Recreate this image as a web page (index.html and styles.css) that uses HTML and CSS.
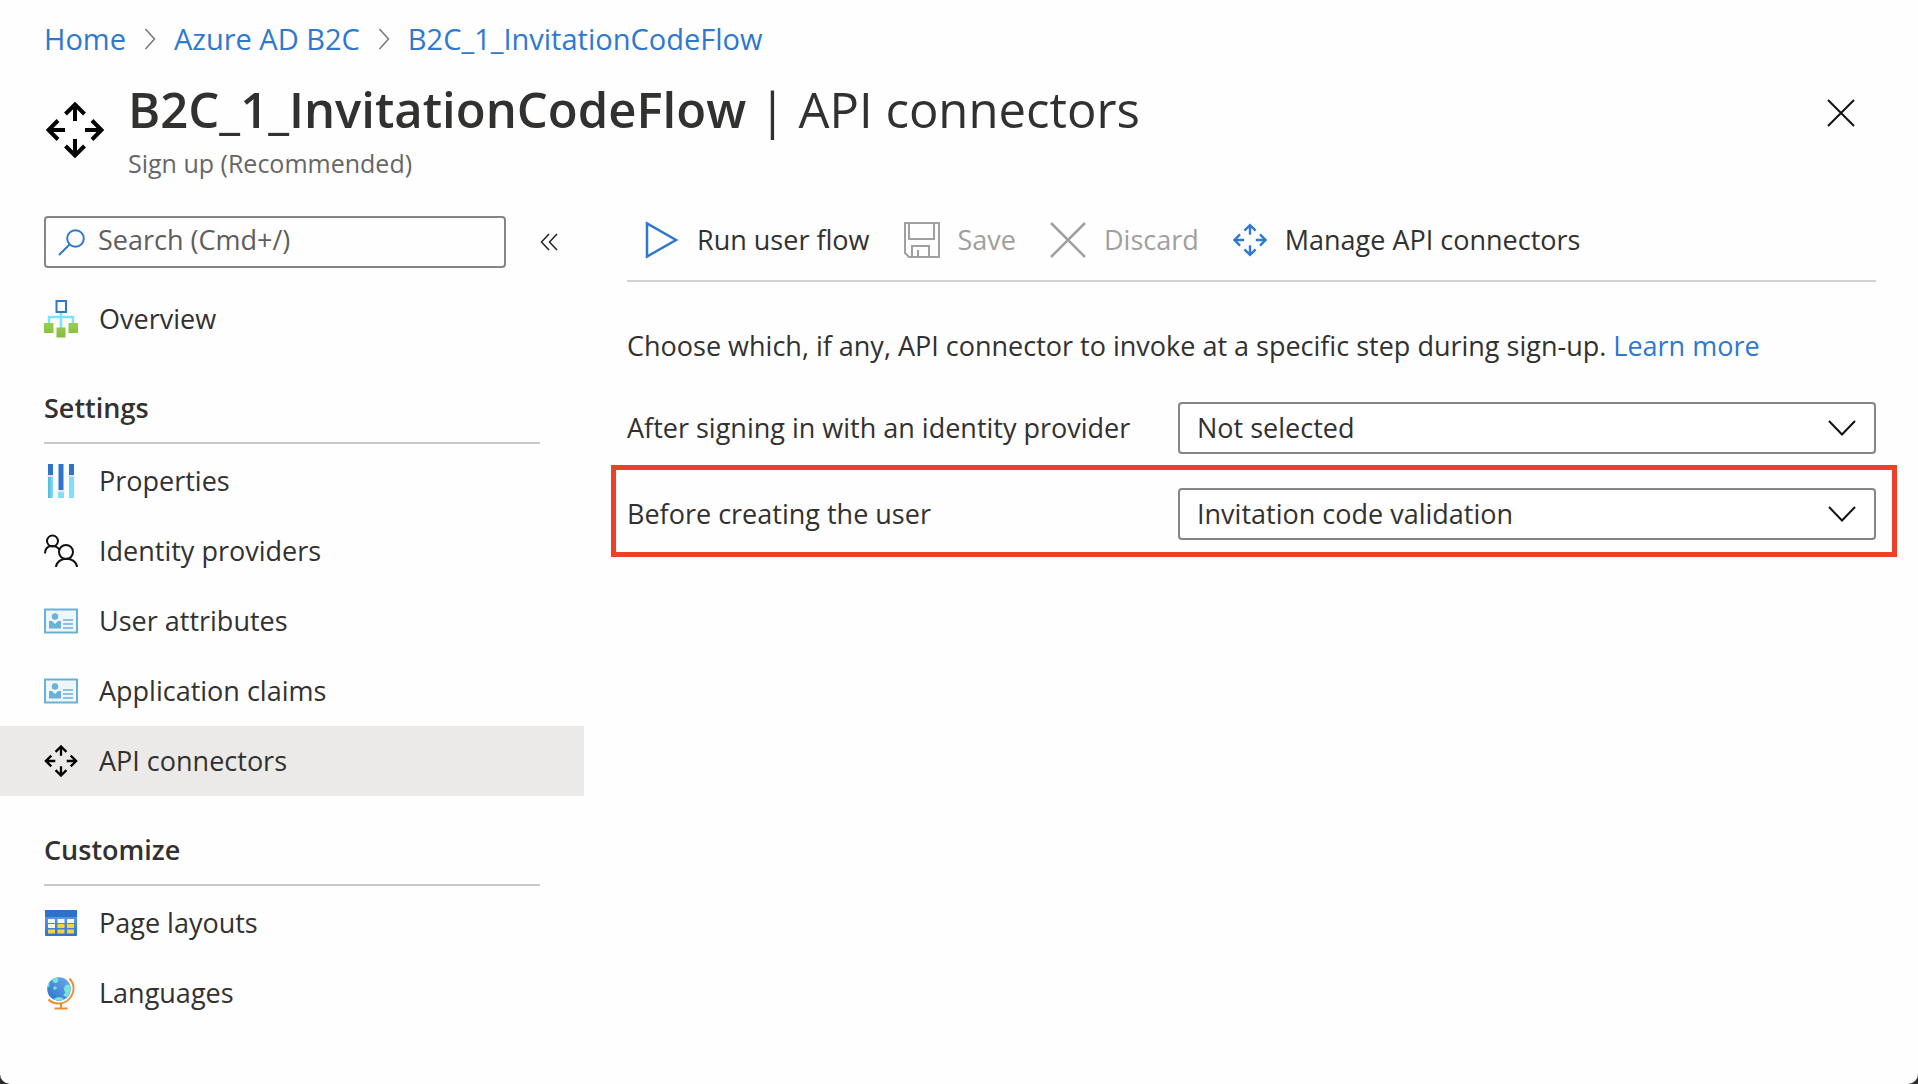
FILE: index.html
```html
<!DOCTYPE html>
<html lang="en">
<head>
<meta charset="utf-8">
<meta name="viewport" content="width=device-width, initial-scale=1">
<title>B2C_1_InvitationCodeFlow | API connectors</title>
<link rel="stylesheet" href="styles.css">
</head>
<body>
<svg class="defs" aria-hidden="true">
  <defs>
    <symbol id="arrows" viewBox="0 0 58 56">
      <g fill="none" stroke="currentColor" stroke-width="4">
        <path d="M29 19V2M19.500 12L29 2.500 38.500 12"/>
        <path d="M29 37V54M19.500 44L29 53.500 38.500 44"/>
        <path d="M19 28H2M12 18.500L2.500 28 12 37.500"/>
        <path d="M39 28H56M46 18.500L55.500 28 46 37.500"/>
      </g>
    </symbol>
    <symbol id="card" viewBox="0 0 34 26">
      <rect x="1" y="1.500" width="32" height="23" fill="#eef6fb" stroke="#69b1d6" stroke-width="2"/>
      <circle cx="11" cy="8.500" r="3.200" fill="#69b1d6"/>
      <path d="M5 13h3l3 3 3-3h3v7.500H5z" fill="#69b1d6"/>
      <path d="M19 12h10M19 16h10M19 20h10" stroke="#69b1d6" stroke-width="1.400"/>
    </symbol>
    <symbol id="crumb" viewBox="0 0 12 22">
      <path d="M1.500 1L10.500 11 1.500 21" fill="none" stroke="#777" stroke-width="1.500"/>
    </symbol>
    <symbol id="chevron" viewBox="0 0 28 16">
      <path d="M1 1L14 14.500 27 1" fill="none" stroke="#111" stroke-width="2"/>
    </symbol>
    <linearGradient id="green" x1="0" y1="0" x2="0" y2="1"><stop offset="0" stop-color="#98cf4d"/><stop offset="1" stop-color="#83bb3f"/></linearGradient>
    <linearGradient id="sheet" x1="0" y1="0" x2="0" y2="1"><stop offset="0" stop-color="#6ba4ec"/><stop offset="1" stop-color="#2c74cc"/></linearGradient>
    <linearGradient id="globe" x1="1" y1="0" x2="0" y2="1"><stop offset="0" stop-color="#72a8ef"/><stop offset="1" stop-color="#2b73cd"/></linearGradient>
    <linearGradient id="cyan"><stop offset="0" stop-color="#58b5d5"/><stop offset="1" stop-color="#7be0fa"/></linearGradient>
  </defs>
</svg>
<div class="blade">
  <header class="header">
    <nav class="breadcrumb" aria-label="Breadcrumb">
      <a href="#">Home</a>
      <svg class="crumb"><use href="#crumb"/></svg>
      <a href="#">Azure AD B2C</a>
      <svg class="crumb"><use href="#crumb"/></svg>
      <a href="#">B2C_1_InvitationCodeFlow</a>
    </nav>
    <div class="heading">
      <svg class="heading-icon"><use href="#arrows"/></svg>
      <div class="heading-text">
        <h1><strong>B2C_1_InvitationCodeFlow</strong> | API connectors</h1>
        <p>Sign up (Recommended)</p>
      </div>
      <button class="close" type="button" aria-label="Close">
        <svg viewBox="0 0 28 28" width="28" height="28"><path d="M1 1L27 27M27 1L1 27" stroke="#111" stroke-width="2"/></svg>
      </button>
    </div>
  </header>
  <div class="body">
    <aside class="sidebar">
      <div class="search-row">
        <label class="search">
          <svg viewBox="0 0 27 27" width="27" height="27" fill="none" stroke="#2e78d0" stroke-width="2"><circle cx="17.500" cy="9.500" r="8.300"/><path d="M11.500 15.500L1 26"/></svg>
          <input type="search" placeholder="Search (Cmd+/)" aria-label="Search">
        </label>
        <button class="collapse" type="button" aria-label="Collapse menu">
          <svg viewBox="0 0 18 18" width="18" height="18" fill="none" stroke="#222" stroke-width="1.500"><path d="M9 1L1.500 9 9 17M17 1L9.500 9 17 17"/></svg>
        </button>
      </div>
      <nav aria-label="Menu">
        <ul class="menu">
          <li><a href="#">
            <svg viewBox="0 0 34 40" width="34" height="40"><path d="M17 13v16M5 25v-7h24v7" fill="none" stroke="#7be3fb" stroke-width="2.500"/><rect x="12.500" y="2" width="9.500" height="11" fill="#fff" stroke="#2e78d0" stroke-width="2"/><path d="M0 24h9.500v10H0zM12.500 28.500h9v10h-9zM24.500 24H34v10h-9.500z" fill="url(#green)"/></svg>
            Overview</a></li>
        </ul>
        <h2>Settings</h2>
        <ul class="menu section">
          <li><a href="#">
            <svg viewBox="0 0 34 36" width="34" height="36"><path d="M4 14h5v21H4z" fill="url(#cyan)"/><path d="M14 29h6v6h-6zM25 14h5v21h-5z" fill="#7be0fa"/><path d="M4 1h5v11H4zM14.500 1h5v26h-5zM25 1h5v11h-5z" fill="#2e74cb"/><path d="M3.500 13h6M13.500 28.500h7M24.500 13h6" stroke="#e0e0e4" stroke-width="2"/></svg>
            Properties</a></li>
          <li><a href="#">
            <svg viewBox="0 0 34 34" width="34" height="34" fill="none" stroke="#111" stroke-width="2"><circle cx="8.500" cy="7" r="5.500"/><path d="M1 19.500C1 9.500 13 10.500 15.500 16"/><circle cx="22" cy="18" r="7"/><path d="M12 33C13 22 32 22 33 33"/></svg>
            Identity providers</a></li>
          <li><a href="#"><svg width="34" height="26"><use href="#card"/></svg>User attributes</a></li>
          <li><a href="#"><svg width="34" height="26"><use href="#card"/></svg>Application claims</a></li>
          <li><a class="current" href="#" aria-current="page"><svg width="34" height="32"><use href="#arrows"/></svg>API connectors</a></li>
        </ul>
        <h2>Customize</h2>
        <ul class="menu section">
          <li><a href="#">
            <svg viewBox="0 0 34 28" width="34" height="28"><rect x="1" y="1" width="32" height="26" rx="1" fill="url(#sheet)"/><path d="M1 1h32v7H1z" fill="#2c72c8"/><path d="M4 10h7v4H4zM13.500 10h7v4h-7zM23 10h7v4h-7zM4 15h7v4H4z" fill="#f3f6fb"/><path d="M13.500 15h7v4h-7zM23 15h7v4h-7zM4 20.500h7v4H4zM13.500 20.500h7v4h-7zM23 20.500h7v4h-7z" fill="#fbd23c"/></svg>
            Page layouts</a></li>
          <li><a href="#">
            <svg viewBox="0 0 34 34" width="34" height="34"><circle cx="15" cy="13" r="11.800" fill="url(#globe)"/><path d="M8 3l5-1.500c2 2 1.500 5-1 5.500-2 .500-3.500-1.500-4-4zM20 12c1-4 5-4.500 6.500-2 .700 5-.500 8-3 10.500-1 .500-4 0-4-2l2-2c-1-1-1.500-2.500-1.500-4.500zM10 23c2-2 7-2.500 10 0-3 2-7 2-10 0zM4 8l2-1-1 4-1.500.500z" fill="#74e5d0"/><circle cx="11" cy="12" r="1.800" fill="#74e5d0"/><path d="M25.500 2.500C35 13 26 28 14.500 27.500 10.500 27.500 7 26 4.500 23.500M17 28v4.500M10.500 32.500h13" fill="none" stroke="#ee8a30" stroke-width="2"/></svg>
            Languages</a></li>
        </ul>
      </nav>
    </aside>
    <main class="content">
      <div class="toolbar">
        <button type="button"><svg viewBox="0 0 36 38" width="36" height="38"><path d="M4 2.500V35.500L33 19z" fill="none" stroke="#2e78d0" stroke-width="2.500"/></svg>Run user flow</button>
        <button type="button" disabled><svg viewBox="0 0 36 36" width="36" height="36" fill="none" stroke="#a0a0a0" stroke-width="2"><path d="M1 1h34v34H5l-4-4zM5 1v16h25V1M8 35V24h17v11M14 35v-7"/></svg>Save</button>
        <button type="button" disabled><svg viewBox="0 0 36 36" width="36" height="36"><path d="M1 1L35 35M35 1L1 35" stroke="#a0a0a0" stroke-width="2.500"/></svg>Discard</button>
        <button class="manage" type="button"><svg width="34" height="34"><use href="#arrows"/></svg>Manage API connectors</button>
      </div>
      <p class="intro">Choose which, if any, API connector to invoke at a specific step during sign-up. <a href="#">Learn more</a></p>
      <form class="form">
        <div class="field">
          <label for="after">After signing in with an identity provider</label>
          <div class="select"><select id="after"><option>Not selected</option></select><svg><use href="#chevron"/></svg></div>
        </div>
        <div class="field highlighted">
          <label for="before">Before creating the user</label>
          <div class="select"><select id="before"><option>Invitation code validation</option></select><svg><use href="#chevron"/></svg></div>
        </div>
      </form>
    </main>
  </div>
</div>
</body>
</html>
```
FILE: styles.css
```css
* { box-sizing: border-box; }

body {
  margin: 0;
  background: #2b2b2b;
  color: #323130;
  font: 27px/36px "Open Sans", "Noto Sans", sans-serif;
}

h1, h2, p, ul { margin: 0; padding: 0; }
ul { list-style: none; }
svg { display: block; flex: none; }
a { color: #2e78d0; text-decoration: none; }
button, input, select { font: inherit; color: inherit; }
button {
  display: flex;
  align-items: center;
  padding: 0;
  border: 0;
  background: none;
}

.defs { position: absolute; width: 0; height: 0; }

.blade {
  min-height: 100vh;
  background: #fefefe;
  border-radius: 0 0 10px 10px;
}

.header { padding: 20px 63px 0 46px; }

.breadcrumb {
  display: flex;
  align-items: center;
  gap: 18px;
  margin-left: -2px;
  font-size: 29px;
  line-height: 38px;
}
.crumb { width: 12px; height: 22px; }

.heading {
  display: flex;
  align-items: flex-start;
  padding-top: 17px;
}
.heading-icon { width: 58px; height: 56px; margin-top: 27px; color: #000; }
.heading-text { flex: 1; padding-left: 24px; }
.heading h1 {
  font-size: 49px;
  line-height: 68px;
  font-weight: 400;
}
.heading strong { font-weight: 600; }
.heading p {
  color: #666;
  font-size: 25px;
  line-height: 40px;
}
.close { margin-top: 24px; }

.body { display: flex; padding-top: 33px; }

.sidebar { flex: none; width: 584px; }

.search-row {
  display: flex;
  align-items: center;
  gap: 34px;
  padding: 0 26px 0 44px;
  margin-bottom: 16px;
}
.search {
  display: flex;
  align-items: center;
  gap: 13px;
  width: 462px;
  height: 52px;
  padding-left: 12px;
  border: 2px solid #858585;
  border-radius: 4px;
}
.search input {
  flex: 1;
  min-width: 0;
  padding: 0 0 4px;
  border: 0;
  outline: 0;
  background: none;
}
.search input::placeholder { color: #605e5c; opacity: 1; }

.section { padding-top: 2px; }
.menu a {
  display: flex;
  align-items: center;
  gap: 21px;
  height: 70px;
  padding-left: 44px;
  color: inherit;
}
.menu .current { background: #ebeae9; }
.menu .current svg { color: #000; }
.sidebar h2 {
  height: 90px;
  margin: 0 44px 0 44px;
  padding-top: 36px;
  border-bottom: 2px solid #c8c8c8;
  font-size: 27px;
  line-height: 36px;
  font-weight: 600;
}

.content { flex: 1; min-width: 0; padding: 0 42px 0 43px; }

.toolbar {
  display: flex;
  gap: 34px;
  height: 66px;
  padding-left: 16px;
  border-bottom: 2px solid #d2d0d0;
}
.toolbar button { gap: 18px; height: 48px; white-space: nowrap; }
.toolbar button:disabled { color: #a19f9d; }
.manage svg { color: #2e78d0; }

.intro { padding-top: 46px; }

.form { padding-top: 38px; }
.field {
  display: grid;
  grid-template-columns: 551px 1fr;
  align-items: center;
}
.highlighted {
  margin: 11px -21px 0 -16px;
  padding: 18px 16px 12px 11px;
  border: 5px solid #ee4027;
}
.select { position: relative; }
.select select {
  appearance: none;
  display: block;
  width: 100%;
  height: 52px;
  padding: 0 60px 0 17px;
  border: 2px solid #858585;
  border-radius: 4px;
  background: #fff;
}
.select svg {
  position: absolute;
  right: 20px;
  top: 18px;
  width: 28px;
  height: 16px;
  pointer-events: none;
}
```
